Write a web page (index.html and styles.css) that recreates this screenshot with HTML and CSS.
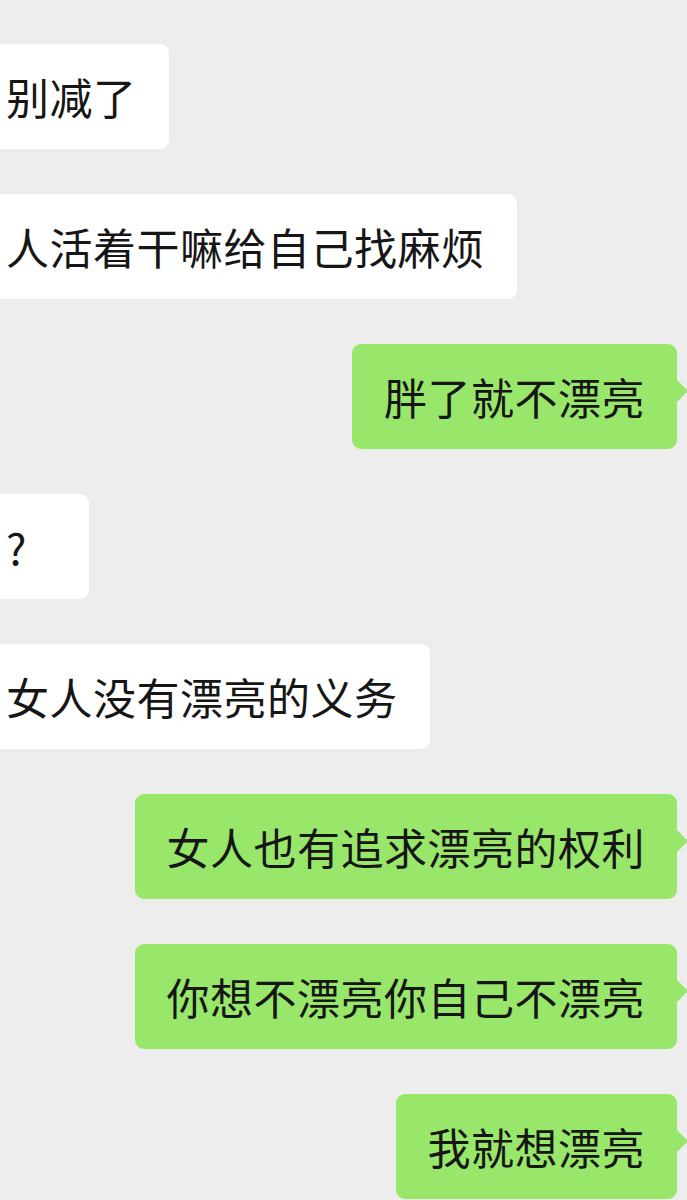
FILE: index.html
```html
<!DOCTYPE html>
<html lang="zh-CN">
<head>
	<meta charset="utf-8">
	<title>聊天记录</title>
	<link rel="stylesheet" href="styles.css">
</head>
<body>
	<div class="chat">
		<div class="msg left"><div class="bubble">别减了</div></div>
		<div class="msg left"><div class="bubble">人活着干嘛给自己找麻烦</div></div>
		<div class="msg right"><div class="bubble">胖了就不漂亮</div></div>
		<div class="msg left"><div class="bubble short">?</div></div>
		<div class="msg left"><div class="bubble">女人没有漂亮的义务</div></div>
		<div class="msg right"><div class="bubble">女人也有追求漂亮的权利</div></div>
		<div class="msg right"><div class="bubble">你想不漂亮你自己不漂亮</div></div>
		<div class="msg right"><div class="bubble">我就想漂亮</div></div>
	</div>
</body>
</html>
```
FILE: styles.css
```css
html, body {
	margin: 0;
	padding: 0;
	background: #ededed;
}
body {
	font-family: "Noto Sans CJK SC", "Noto Sans", sans-serif;
	color: #161616;
	overflow: hidden;
}
.chat {
	display: flex;
	flex-direction: column;
	gap: 45px;
	padding: 44px 10px 40px 0;
}
.msg {
	display: flex;
}
.msg.left {
	justify-content: flex-start;
	margin-left: -26px;
}
.msg.right {
	justify-content: flex-end;
}
.bubble {
	position: relative;
	font-size: 43px;
	letter-spacing: 0.5px;
	line-height: 45px;
	padding: 30px 32px;
	border-radius: 9px;
	white-space: nowrap;
}
.left .bubble {
	background: #ffffff;
}
.right .bubble {
	background: #98e76b;
}
.right .bubble::after {
	content: "";
	position: absolute;
	right: -11px;
	top: 36px;
	border-top: 11px solid transparent;
	border-bottom: 11px solid transparent;
	border-left: 11px solid #98e76b;
}
.bubble.short {
	min-width: 51px;
}
```
